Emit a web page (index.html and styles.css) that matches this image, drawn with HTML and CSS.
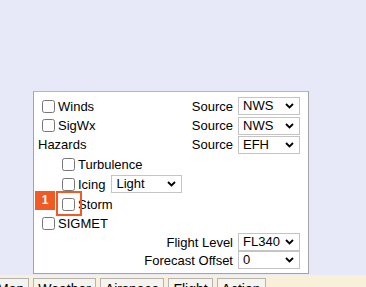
FILE: index.html
```html
<!DOCTYPE html>
<html lang="en">
<head>
<meta charset="UTF-8">
<title>Weather layers</title>
<link rel="stylesheet" href="styles.css">
</head>
<body>
<div class="panel">
  <div class="row">
    <label><input type="checkbox">Winds</label>
    <span class="src">Source <select><option>NWS</option></select></span>
  </div>
  <div class="row r19">
    <label><input type="checkbox">SigWx</label>
    <span class="src">Source <select><option>NWS</option></select></span>
  </div>
  <div class="row r19">
    <span class="title">Hazards</span>
    <span class="src">Source <select><option>EFH</option></select></span>
  </div>
  <div class="row sub">
    <label><input type="checkbox">Turbulence</label>
  </div>
  <div class="row sub">
    <label><input type="checkbox">Icing</label>
    <select class="sev"><option>Light</option></select>
  </div>
  <div class="row sub">
    <label><input type="checkbox">Storm</label>
  </div>
  <div class="row r19">
    <label><input type="checkbox">SIGMET</label>
  </div>
  <div class="row r18 right">
    <span class="src">Flight Level <select><option>FL340</option></select></span>
  </div>
  <div class="row r18 right">
    <span class="src">Forecast Offset <select><option>0</option></select></span>
  </div>

  <!-- step marker over the Storm checkbox -->
  <div class="mark-badge">1</div>
  <div class="mark-box"></div>
</div>

<div class="tabs">
  <div class="tab">Map</div>
  <div class="tab">Weather</div>
  <div class="tab">Airspace</div>
  <div class="tab">Flight</div>
  <div class="tab">Action</div>
</div>
</body>
</html>
```

FILE: styles.css
```css
*{box-sizing:border-box}
html,body{margin:0;padding:0}
body{width:366px;height:287px;overflow:hidden;font-family:"Liberation Sans",Arial,sans-serif;font-size:13px;color:#000;background:#e8e9f8}
.panel{position:relative;margin:91px 0 0 33px;width:276px;background:#fff;border:1px solid #a4a4a4;border-top-color:#b4b6c8;padding:4px 8px 4px 4px}
.row{display:flex;align-items:center;justify-content:space-between;height:20px;white-space:nowrap}
.r19{height:19px}
.r18{height:18px}
.row.right{justify-content:flex-end}
.row.sub{justify-content:flex-start;padding-left:20px}
label{display:flex;align-items:center}
input[type=checkbox]{width:13px;height:13px;margin:3px 3px 3px 4px}
.src{display:flex;align-items:center}
select{appearance:none;-webkit-appearance:none;width:62px;height:18px;margin-left:5px;padding:0 0 0 4px;border:1px solid #c4c4c4;border-radius:0;background:#fff url("data:image/svg+xml;utf8,<svg xmlns='http://www.w3.org/2000/svg' width='9' height='6' viewBox='0 0 9 6'><path d='M1 1l3.5 3.5L8 1' fill='none' stroke='black' stroke-width='1.8'/></svg>") no-repeat right 5px center/9px 6px;
  font-family:"Liberation Sans",Arial,sans-serif;font-size:13px;color:#000;line-height:16px}
select.sev{width:71px;margin-left:6px}
.mark-badge{position:absolute;left:1px;top:99px;width:20px;height:19px;background:#f05a24;color:#fff;font-weight:bold;font-size:12px;line-height:19px;text-align:center}
.mark-box{position:absolute;left:22px;top:99px;width:26px;height:25px;border:2px solid #f05a24}
.tabs{display:flex;gap:4px;margin-top:1px;padding-top:3px;height:20px;background:#f8f0d8}
.tabs .tab:first-child{margin-left:-8px}
.tab{padding:1px 4px 0;border:1px solid #b4b4b4;border-bottom:none;background:#f6f4ee;font-size:14px;line-height:18px;height:18px}
```
